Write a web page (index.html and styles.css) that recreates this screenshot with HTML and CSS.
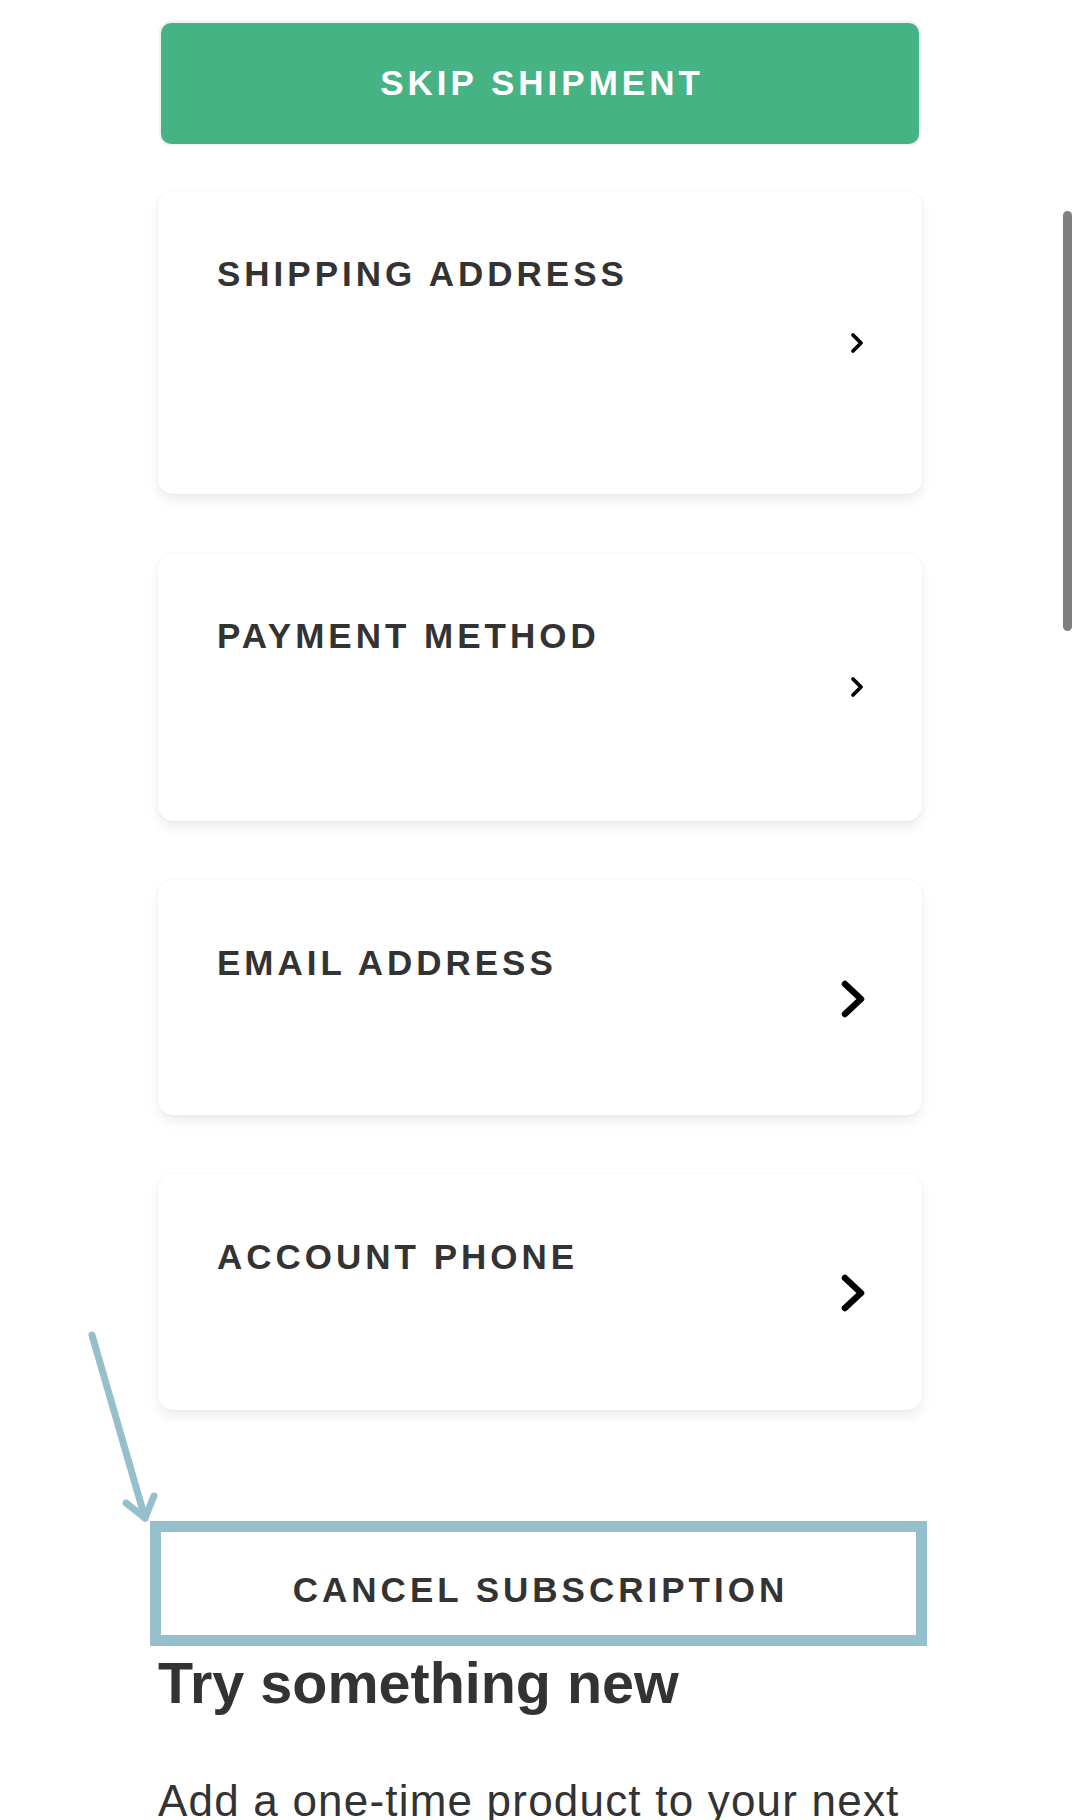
FILE: index.html
```html
<!DOCTYPE html>
<html lang="en">
<head>
  <meta charset="UTF-8" />
  <meta name="viewport" content="width=device-width, initial-scale=1.0"/>
  <title>Manage Subscription</title>
  <link rel="stylesheet" href="styles.css">
</head>
<body>

  <div class="account">
    <button class="skip-btn">Skip Shipment</button>

    <div class="card-list">
      <div class="card card-address">
        <div class="card-title">Shipping Address</div>
        <svg class="chev chev-sm" viewBox="0 0 14 22" width="14" height="22">
          <path d="M3 3 L11 11 L3 19" />
        </svg>
      </div>

      <div class="card card-payment">
        <div class="card-title">Payment Method</div>
        <svg class="chev chev-sm" viewBox="0 0 14 22" width="14" height="22">
          <path d="M3 3 L11 11 L3 19" />
        </svg>
      </div>

      <div class="card card-email">
        <div class="card-title">Email Address</div>
        <svg class="chev chev-lg" viewBox="0 0 26 40" width="26" height="40">
          <path d="M5 5 L21 20 L5 35" />
        </svg>
      </div>

      <div class="card card-phone">
        <div class="card-title">Account Phone</div>
        <svg class="chev chev-lg" viewBox="0 0 26 40" width="26" height="40">
          <path d="M5 5 L21 20 L5 35" />
        </svg>
      </div>
    </div>

    <div class="cancel-wrap">
      <!-- annotation arrow -->
      <svg class="hint-arrow" viewBox="0 0 80 205" width="80" height="205">
        <path d="M12 10 L65 193" />
        <path d="M46 178 L65 193 L74 171" />
      </svg>
      <button class="cancel-btn">Cancel Subscription</button>
    </div>

    <h2 class="try-title">Try something new</h2>
    <p class="try-text">Add a one-time product to your next shipment.</p>
  </div>

  <div class="scroll-thumb"></div>

</body>
</html>
```

FILE: styles.css
```css
* {
  box-sizing: border-box;
  margin: 0;
  padding: 0;
  font-family: 'Liberation Sans', Arial, sans-serif;
}

html, body {
  height: 1820px;
  overflow: hidden;
  background: #fff;
}

.account {
  padding: 23px 158px 0;
  color: #333;
}

.skip-btn {
  display: block;
  width: calc(100% - 6px);
  margin: 0 3px;
  padding: 39px 0 40px;
  background-color: #46b385;
  color: #fff;
  border: none;
  border-radius: 10px;
  box-shadow: 0 0 0 2px #f1f1f1;
  font-size: 35px;
  line-height: 42px;
  font-weight: bold;
  letter-spacing: 4px;
  text-transform: uppercase;
  text-indent: 4px;
}

.card-list {
  display: flex;
  flex-direction: column;
  gap: 59px;
  margin-top: 47px;
}

.card {
  display: flex;
  justify-content: space-between;
  align-items: flex-start;
  position: relative;
  padding: 62px 59px 0;
  background: #fff;
  border-radius: 15px;
  box-shadow: 0 0 3px rgba(0, 0, 0, 0.05), 0 7px 12px rgba(0, 0, 0, 0.07);
}

.card-address { height: 303px; }
.card-payment { height: 268px; }
.card-email { height: 235px; }
.card-phone { height: 236px; }

.card-title {
  font-size: 35px;
  line-height: 42px;
  font-weight: bold;
  letter-spacing: 4px;
  text-transform: uppercase;
  color: #333;
}

.chev {
  align-self: center;
  fill: none;
  stroke: #000;
  stroke-linecap: round;
  stroke-linejoin: round;
}

.chev-sm {
  stroke-width: 3.8;
  margin-top: -62px;
  margin-right: -1px;
}

.chev-lg {
  stroke-width: 6.5;
  margin-top: -60px;
  margin-right: -3px;
}

.cancel-wrap {
  position: relative;
  margin: 111px -5px 0 -8px;
}

.cancel-btn {
  display: block;
  width: 100%;
  padding: 37px 0 24px;
  background: #fff;
  border: 11px solid #96bfcc;
  color: #333;
  font-size: 35px;
  line-height: 42px;
  font-weight: bold;
  letter-spacing: 4px;
  text-transform: uppercase;
  text-indent: 4px;
}

.hint-arrow {
  position: absolute;
  left: -70px;
  top: -196px;
  fill: none;
  stroke: #96bfcc;
  stroke-width: 7;
  stroke-linecap: round;
  stroke-linejoin: round;
}

.try-title {
  margin-top: 3px;
  font-size: 57.5px;
  line-height: 68px;
  font-weight: bold;
  color: #333;
}

.try-text {
  margin-top: 53px;
  font-size: 44px;
  line-height: 62px;
  letter-spacing: 1.2px;
  color: #333;
}

.scroll-thumb {
  position: fixed;
  right: 8px;
  top: 211px;
  width: 9px;
  height: 420px;
  border-radius: 5px;
  background: #7f7f7f;
}
```
